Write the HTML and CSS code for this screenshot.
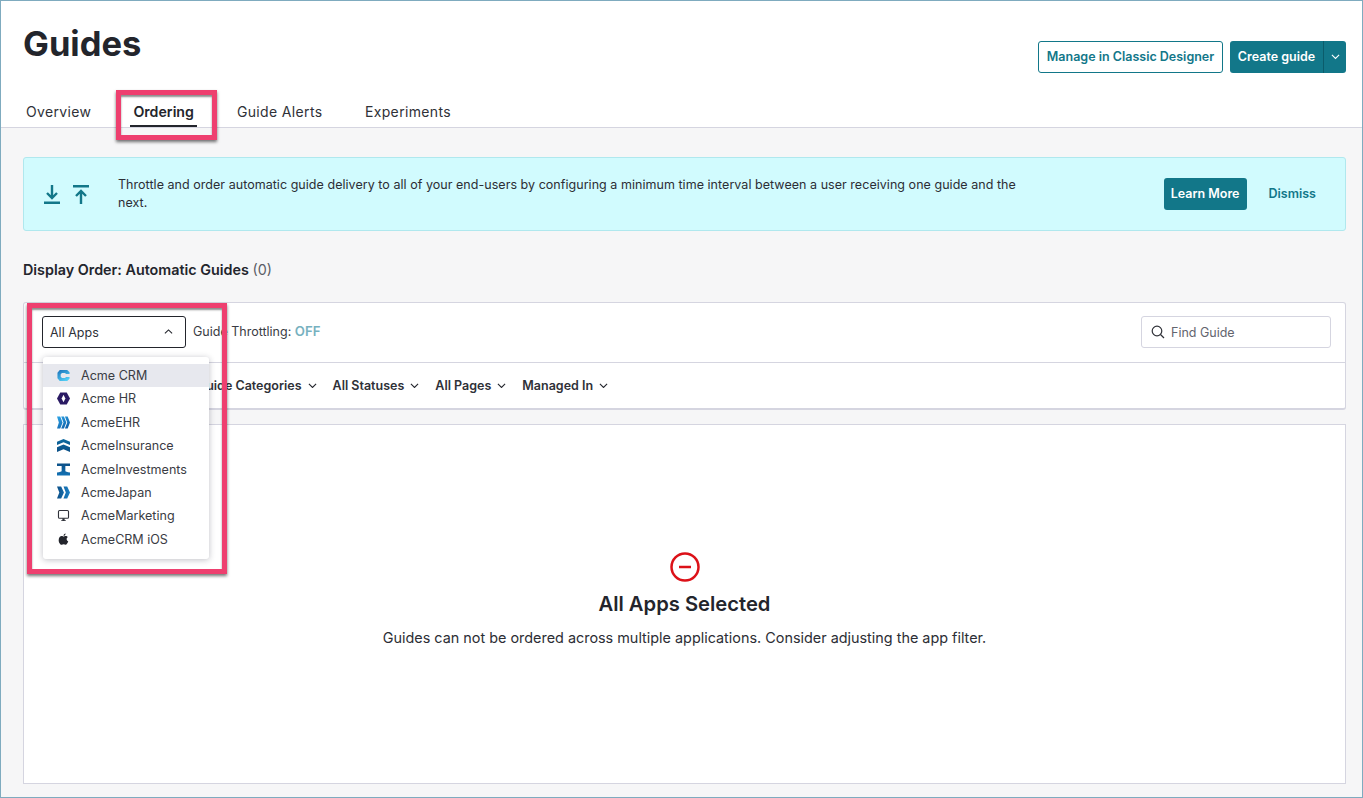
FILE: index.html
```html
<!DOCTYPE html>
<html lang="en">
<head>
<meta charset="utf-8">
<title>Guides</title>
<link rel="stylesheet" href="styles.css">
</head>
<body>
<div class="frame">
  <header class="top">
    <div class="top-row">
      <h1 class="title">Guides</h1>
      <div class="actions">
        <button class="btn btn-outline">Manage in Classic Designer</button>
        <div class="split">
          <button class="btn btn-solid split-main">Create guide</button>
          <button class="btn btn-solid split-caret" aria-label="More">
            <svg class="chev" viewBox="0 0 10 6"><path d="M1 1l4 4 4-4"/></svg>
          </button>
        </div>
      </div>
    </div>
    <nav class="tabs">
      <a class="tab">Overview</a>
      <a class="tab tab-active">Ordering</a>
      <a class="tab">Guide Alerts</a>
      <a class="tab">Experiments</a>
    </nav>
  </header>

  <main class="content">
    <section class="banner">
      <div class="banner-icons">
        <svg viewBox="0 0 16 19" class="arrow-icon"><path d="M8 0v12.500M3 8l5 5 5-5M0 17.800h16"/></svg>
        <svg viewBox="0 0 16 19" class="arrow-icon"><path d="M8 19V6M3 11l5-5 5 5M0 1.200h16"/></svg>
      </div>
      <p class="banner-text">Throttle and order automatic guide delivery to all of your end-users by configuring a minimum time interval between a user receiving one guide and the next.</p>
      <div class="banner-actions">
        <button class="btn btn-solid learn">Learn More</button>
        <button class="dismiss">Dismiss</button>
      </div>
    </section>

    <h2 class="section-title">Display Order: Automatic Guides <span class="count">(0)</span></h2>

    <section class="filters">
      <div class="filter-top">
        <div class="select">
          <span>All Apps</span>
          <svg class="chev chev-dark" viewBox="0 0 10 6"><path d="M1 5l4-4 4 4"/></svg>
        </div>
        <span class="throttle">Guide Throttling: <b>OFF</b></span>
        <div class="search">
          <svg viewBox="0 0 14 14" class="search-icon"><circle cx="6" cy="6" r="4.800"/><path d="M9.500 9.500l3.500 3.500"/></svg>
          <span>Find Guide</span>
        </div>
      </div>
      <div class="filter-bottom">
        <span class="filter">All Guide Categories<svg class="chev chev-dark" viewBox="0 0 10 6"><path d="M1 1l4 4 4-4"/></svg></span>
        <span class="filter">All Statuses<svg class="chev chev-dark" viewBox="0 0 10 6"><path d="M1 1l4 4 4-4"/></svg></span>
        <span class="filter">All Pages<svg class="chev chev-dark" viewBox="0 0 10 6"><path d="M1 1l4 4 4-4"/></svg></span>
        <span class="filter">Managed In<svg class="chev chev-dark" viewBox="0 0 10 6"><path d="M1 1l4 4 4-4"/></svg></span>
      </div>
    </section>

    <section class="empty">
      <svg class="empty-icon" viewBox="0 0 30 30"><circle cx="15" cy="15" r="13.500"/><path d="M9 15h12"/></svg>
      <h3 class="empty-title">All Apps Selected</h3>
      <p class="empty-text">Guides can not be ordered across multiple applications. Consider adjusting the app filter.</p>
    </section>
  </main>

  <ul class="menu">
    <li class="menu-item menu-item-active">
      <svg class="logo" viewBox="0 0 14 14"><defs><linearGradient id="gc" x1="0" y1="0" x2="0.600" y2="1"><stop offset="0" stop-color="#1a6fb8"/><stop offset="1" stop-color="#52cdf5"/></linearGradient></defs><path fill="url(#gc)" d="M3 1h8l2.500 2.500v2H9.800L8.600 4.300H5.400L4 5.700v2.600l1.400 1.400h3.200l1.200-1.200h3.700v2L11 13H3L.5 10V4z"/></svg>
      Acme CRM
    </li>
    <li class="menu-item">
      <svg class="logo" viewBox="0 0 14 14"><path fill="#2a1a63" d="M3.500 .5h7L14 7l-3.500 6.500h-7L0 7z"/><path fill="#fff" d="M7 3l2 4-2 4-2-4z"/></svg>
      Acme HR
    </li>
    <li class="menu-item">
      <svg class="logo" viewBox="0 0 14 14"><defs><linearGradient id="ge" x1="0" y1="0" x2="0.700" y2="1"><stop offset="0" stop-color="#2ea6e8"/><stop offset="1" stop-color="#0f5fa8"/></linearGradient></defs><path fill="url(#ge)" d="M0 .5h3.500L6 7l-2.500 6.500H0L2 7zM4.500 .5h3L10 7l-2.500 6.500h-3L7 7zM8.500 .5h3L14 7l-2.500 6.500h-3L11 7z"/></svg>
      AcmeEHR
    </li>
    <li class="menu-item">
      <svg class="logo" viewBox="0 0 14 14"><defs><linearGradient id="gi" x1="0" y1="0" x2="0" y2="1"><stop offset="0" stop-color="#0e6aa0"/><stop offset="1" stop-color="#0c4f86"/></linearGradient></defs><path fill="url(#gi)" d="M7 0l7 3v3.500L7 3.500 0 6.500V3zM7 6l7 3v5L7 11l-7 3V9z"/></svg>
      AcmeInsurance
    </li>
    <li class="menu-item">
      <svg class="logo" viewBox="0 0 14 14"><defs><linearGradient id="gv" x1="0" y1="0" x2="0" y2="1"><stop offset="0" stop-color="#0c4f86"/><stop offset="1" stop-color="#1272b5"/></linearGradient></defs><path fill="url(#gv)" d="M0 .5h14v2.800H9v5.200c0 .6 2 1.200 5 1.700v3.300H0v-3.300c3-.5 5-1.100 5-1.700V3.300H0z"/></svg>
      AcmeInvestments
    </li>
    <li class="menu-item">
      <svg class="logo" viewBox="0 0 14 14"><defs><linearGradient id="gj" x1="0" y1="0" x2="1" y2="0"><stop offset="0" stop-color="#0c4f86"/><stop offset="1" stop-color="#1c82c8"/></linearGradient></defs><path fill="url(#gj)" d="M0 .5h4.500L7.500 7l-3 6.500H0L2.500 7zM7 .5h4L14 7l-3 6.500H7L9.500 7z"/></svg>
      AcmeJapan
    </li>
    <li class="menu-item">
      <svg class="logo" viewBox="0 0 14 14"><rect x="1.600" y="1.600" width="10.800" height="8.400" rx="1.200" fill="none" stroke="#30323a" stroke-width="1.200"/><path fill="#30323a" d="M5.800 10h2.400v2h1.300v1h-5v-1h1.300z"/></svg>
      AcmeMarketing
    </li>
    <li class="menu-item">
      <svg class="logo" viewBox="0 0 14 14"><path fill="#23252c" d="M9.300 .5c.1 1.300-1.100 2.600-2.300 2.500C6.900 1.800 8.100.5 9.300.5zM7 3.800c.6 0 1.300-.6 2.400-.6.900 0 1.800.5 2.300 1.200-2 1.200-1.700 3.900.4 4.800-.5 1.400-1.700 3.500-2.800 3.500-.8 0-1.200-.5-2.100-.5s-1.400.5-2.100.5C3.400 12.700 1.800 10 1.800 7.700c0-2.700 1.700-4.400 3.300-4.400 1 0 1.400.5 1.900.5z"/></svg>
      AcmeCRM iOS
    </li>
  </ul>

  <div class="callout callout-tab"></div>
  <div class="callout callout-menu"></div>
</div>
</body>
</html>
```
FILE: styles.css
```css
* { box-sizing: border-box; }
html, body { margin: 0; padding: 0; }
body { font-family: Inter, "Liberation Sans", sans-serif; color: #23252c; }
p, h1, h2, h3, ul { margin: 0; padding: 0; }
button { font-family: inherit; cursor: pointer; }

.frame {
  position: relative;
  width: 1363px;
  height: 798px;
  border: 1px solid #7fabbf;
  background: #f6f6f7;
  overflow: hidden;
}

.top {
  height: 127px;
  background: #fff;
  border-bottom: 1px solid #d5d5e0;
  padding: 0 16px 0 22px;
}
.top-row {
  display: flex;
  justify-content: space-between;
  height: 87px;
}
.title {
  font-size: 34.500px;
  line-height: 42px;
  font-weight: 700;
  margin-top: 22px;
}
.actions { display: flex; gap: 7px; margin-top: 40px; align-items: flex-start; }

.btn {
  height: 32px;
  font-size: 12.500px;
  font-weight: 600;
  border-radius: 3px;
  padding: 0 0 2px;
}
.btn-outline {
  width: 185px;
  background: #fff;
  color: #127789;
  border: 1px solid #127789;
}
.btn-solid {
  background: #127789;
  color: #fff;
  border: 0;
}
.split { display: flex; }
.split-main { width: 93px; border-radius: 3px 0 0 3px; }
.split-caret {
  width: 23px;
  border-radius: 0 3px 3px 0;
  border-left: 1px solid #0b5c6b;
  display: flex;
  align-items: center;
  justify-content: center;
  padding: 0;
}
.chev {
  width: 9px;
  height: 5.400px;
  fill: none;
  stroke: #fff;
  stroke-width: 1.200;
  flex: none;
}
.chev-dark { stroke: #23252c; }

.tabs { display: flex; padding-left: 3px; height: 39px; }
.tab {
  font-size: 14px;
  line-height: 20px;
  letter-spacing: .35px;
  padding-top: 14px;
  color: #2f3138;
  position: relative;
}
.tab:nth-child(1) { margin-right: 42px; }
.tab:nth-child(2) { margin-right: 43px; }
.tab:nth-child(3) { margin-right: 42.500px; }
.tab-active { font-weight: 600; font-size: 14.200px; color: #23252c; letter-spacing: 0; }
.tab-active::after {
  content: "";
  position: absolute;
  left: -3px;
  right: -3px;
  bottom: 0;
  height: 2px;
  background: #23252c;
}

.content { padding: 29px 16px 0 22px; }

.banner {
  height: 74px;
  background: #d1fbfe;
  border: 1px solid #b0e8ee;
  border-radius: 3px;
  display: flex;
  align-items: center;
  padding: 0 29px 0 20px;
}
.banner-icons { display: flex; gap: 13px; width: 74px; flex: none; }
.arrow-icon {
  width: 16px;
  height: 19px;
  fill: none;
  stroke: #127789;
  stroke-width: 2.400;
  flex: none;
}
.banner-text {
  font-size: 12.500px;
  line-height: 18.500px;
  width: 905px;
  color: #2c2e35;
  letter-spacing: .04px;
}
.banner-actions { margin-left: auto; display: flex; align-items: center; gap: 22px; }
.learn { width: 83px; }
.dismiss {
  background: none;
  border: 0;
  padding: 0 0 2px;
  font-size: 12.500px;
  font-weight: 600;
  color: #127789;
}

.section-title {
  font-size: 14.350px;
  line-height: 20px;
  font-weight: 600;
  margin-top: 29px;
}
.count { font-weight: 400; color: #5b5d66; }

.filters {
  margin-top: 22px;
  background: #fff;
  border: 1px solid #d5d5e0;
  border-bottom-width: 2px;
  border-radius: 3px;
  height: 108px;
}
.filter-top {
  height: 60px;
  border-bottom: 1px solid #d5d5e0;
  display: flex;
  align-items: center;
  padding: 0 14px 1px 18px;
}
.select {
  width: 144px;
  height: 32px;
  border: 1px solid #23252c;
  border-radius: 3px;
  display: flex;
  align-items: center;
  justify-content: space-between;
  padding: 0 12px 0 7px;
  font-size: 12.500px;
  color: #2f3138;
}
.throttle { margin: 0 0 2px 7px; font-size: 12.500px; color: #3a3c44; }
.throttle b { font-weight: 600; font-size: 13.200px; color: #77b1bf; }
.search {
  margin-left: auto;
  width: 190px;
  height: 32px;
  border: 1px solid #d5d5e0;
  border-radius: 3px;
  display: flex;
  align-items: center;
  gap: 6px;
  padding: 0 9px;
  font-size: 12.500px;
  color: #63656e;
}
.search-icon { width: 14px; height: 14px; fill: none; stroke: #2f3138; stroke-width: 1.200; flex: none; }
.filter-bottom {
  display: flex;
  align-items: center;
  height: 45px;
  padding-left: 154px;
  gap: 16px;
}
.filter {
  display: flex;
  align-items: center;
  gap: 6px;
  font-size: 12.500px;
  font-weight: 600;
  color: #2f3138;
}

.empty {
  margin-top: 14px;
  height: 360px;
  background: #fff;
  border: 1px solid #d5d5e0;
  display: flex;
  flex-direction: column;
  align-items: center;
  padding-top: 127px;
}
.empty-icon { width: 30px; height: 30px; fill: none; stroke: #dc1118; stroke-width: 2.500; }
.empty-title { font-size: 20.200px; line-height: 26px; font-weight: 600; margin-top: 9px; }
.empty-text { font-size: 14.400px; line-height: 20px; margin-top: 11px; color: #2c2e35; }

.menu {
  position: absolute;
  left: 42px;
  top: 356px;
  width: 166px;
  height: 202px;
  background: #fff;
  border-radius: 3px;
  box-shadow: 0 1px 6px rgba(30, 30, 50, .28);
  list-style: none;
  padding-top: 6.800px;
}
.menu-item {
  display: flex;
  align-items: center;
  height: 23.400px;
  padding-left: 14px;
  gap: 11px;
  font-size: 12.550px;
  color: #3a3c44;
}
.menu-item-active { background: #e7e8ee; }
.logo { width: 13px; height: 13px; flex: none; }

.callout {
  position: absolute;
  border: 5px solid #ee3f6f;
  box-shadow: 0 2px 3px rgba(0, 0, 0, .55), inset 0 2px 2px rgba(0, 0, 0, .45);
}
.callout-tab { left: 115px; top: 89px; width: 101px; height: 50px; }
.callout-menu { left: 26px; top: 302px; width: 200px; height: 271px; }
```
